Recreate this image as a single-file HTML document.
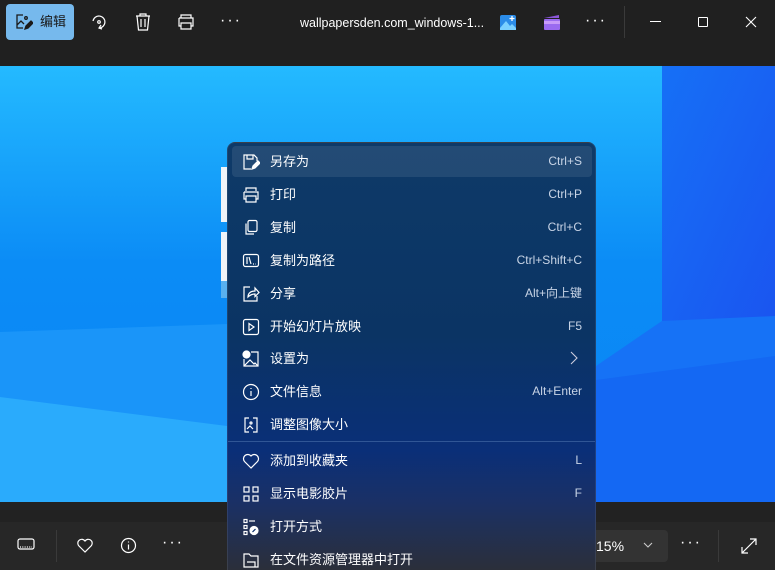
<!DOCTYPE html>
<html><head><meta charset="utf-8"><style>
*{margin:0;padding:0;box-sizing:border-box}
html,body{width:775px;height:570px;overflow:hidden}
body{background:#202020;font-family:"Liberation Sans","Noto Sans CJK SC",sans-serif;color:#fff;position:relative}
.abs{position:absolute}
.top{left:0;top:0;width:775px;height:66px;background:#202020}
.edit{left:6px;top:4px;width:68px;height:36px;background:#76b9ed;border-radius:4px;color:#1a1a1a;font-size:13px}
.botgap{left:0;top:502px;width:775px;height:20px;background:#222}
.menu{left:227px;top:142px;width:369px;height:428px;border-radius:8px 8px 0 0;border:1px solid rgba(255,255,255,0.08);border-bottom:none;
background:linear-gradient(180deg,#0e3a68 0%,#0b3464 45%,#0a2f78 72%,#1a3066 84%,#2b2f3a 100%);overflow:hidden}
.row{position:absolute;left:4px;width:360px;height:31px;font-size:13px}
.row .t{position:absolute;left:38px;top:7px;line-height:17px}
.row .k{position:absolute;right:10px;top:8px;font-size:12px;color:#c8d4e6;line-height:15px}
.row svg{position:absolute;left:10px;top:7px}
.sel{background:rgba(255,255,255,0.09);border-radius:4px}
</style></head><body>
<svg class="abs" style="left:0;top:66px" width="775" height="436">
<defs>
<linearGradient id="g1" x1="0" y1="0" x2="0" y2="1"><stop offset="0" stop-color="#24baff"/><stop offset="0.45" stop-color="#0b8cf6"/><stop offset="1" stop-color="#0a84f4"/></linearGradient>
<linearGradient id="g2" x1="0" y1="0" x2="1" y2="1"><stop offset="0" stop-color="#1670f6"/><stop offset="1" stop-color="#1a55f0"/></linearGradient>
</defs>
<rect width="775" height="436" fill="url(#g1)"/>
<rect x="662" y="0" width="113" height="255" fill="url(#g2)"/>
<polygon points="596,300 662,255 775,250 775,300 596,315" fill="#1672f6"/>
<polygon points="0,266 227,258 227,436 0,436" fill="#1a95f9"/>
<polygon points="0,331 227,360 227,436 0,436" fill="#2aabfc"/>
<polygon points="596,314 775,290 775,436 596,436" fill="#1468f3"/>
<rect x="221" y="101" width="7" height="55" fill="#f0f4f8"/>
<rect x="221" y="166" width="7" height="49" fill="#f0f4f8"/>
<rect x="221" y="215" width="7" height="17" fill="#58b0f0"/>
</svg>
<div class="abs top"></div>
<div class="abs edit">
<svg class="abs" style="left:9px;top:9px" width="18" height="18" viewBox="0 0 18 18" fill="none" stroke="#1a1a1a" stroke-width="1.3"><path d="M8 2H2v13h6M2 12l4-4 3 3"/><circle cx="11" cy="5" r="1.3"/><path d="M10 16l1-3 5-5 2 2-5 5z" fill="#1a1a1a"/></svg>
<span class="abs" style="left:34px;top:10px;line-height:16px">编辑</span></div>
<svg class="abs" style="left:89px;top:12px" width="20" height="20" viewBox="0 0 20 20" fill="none" stroke="#fff" stroke-width="1.2"><path d="M4 9a6 6 0 1 1 6 7"/><path d="M12 13l-2 3 3 1"/><circle cx="10" cy="10" r="1.3"/></svg>
<svg class="abs" style="left:134px;top:12px" width="18" height="20" viewBox="0 0 18 20" fill="none" stroke="#fff" stroke-width="1.2"><path d="M2 4h14M6 4V2h6v2M3 4l1.5 14h9L15 4M7 7v8M11 7v8"/></svg>
<svg class="abs" style="left:176px;top:13px" width="20" height="18" viewBox="0 0 20 18" fill="none" stroke="#fff" stroke-width="1.2"><path d="M5 5V2h10v3M3 5h14v8h-2M5 13H3V5M5 10h10v6H5z"/></svg>
<div class="abs" style="left:220px;top:12px;font-size:16px;letter-spacing:2px">···</div>
<div class="abs" style="left:300px;top:15px;font-size:12.5px;line-height:16px;color:#fff">wallpapersden.com_windows-1...</div>
<svg class="abs" style="left:500px;top:15px" width="16" height="15" viewBox="0 0 16 15"><rect width="16" height="15" rx="2" fill="#2b8ce8"/><path d="M0 13l6-7 4 5 2-2 4 4v2H0z" fill="#7ad0ff"/><path d="M12 1v5M9.5 3.5h5" stroke="#fff" stroke-width="1.3"/></svg>
<svg class="abs" style="left:543px;top:14px" width="17" height="16" viewBox="0 0 17 16"><path d="M1 4l15-3v3z" fill="#8a55d8"/><rect x="1" y="5" width="16" height="11" rx="1" fill="#9a6af0"/><rect x="1" y="7" width="16" height="3" fill="#c79af8"/></svg>
<div class="abs" style="left:585px;top:12px;font-size:16px;letter-spacing:2px">···</div>
<div class="abs" style="left:624px;top:6px;width:1px;height:32px;background:#3a3a3a"></div>
<div class="abs" style="left:650px;top:21px;width:11px;height:1px;background:#fff"></div>
<div class="abs" style="left:698px;top:17px;width:10px;height:10px;border:1px solid #fff;border-radius:1px"></div>
<svg class="abs" style="left:745px;top:16px" width="12" height="12" viewBox="0 0 12 12" stroke="#fff" stroke-width="1.1"><path d="M1 1l10 10M11 1L1 11"/></svg>

<div class="abs botgap"></div>
<div class="abs" style="left:0;top:522px;width:775px;height:48px;background:#272727"></div>
<svg class="abs" style="left:17px;top:537px" width="18" height="14" viewBox="0 0 18 14" fill="none" stroke="#fff" stroke-width="1.2"><rect x="1" y="2" width="16" height="10" rx="2"/><path d="M3 10h12" stroke-dasharray="1 1.3"/></svg>
<div class="abs" style="left:56px;top:530px;width:1px;height:32px;background:#3a3a3a"></div>
<svg class="abs" style="left:76px;top:538px" width="18" height="16" viewBox="0 0 18 16" fill="none" stroke="#fff" stroke-width="1.2"><path d="M9 14L2.5 7.5A3.6 3.6 0 0 1 9 3a3.6 3.6 0 0 1 6.5 4.5z"/></svg>
<svg class="abs" style="left:120px;top:537px" width="17" height="17" viewBox="0 0 17 17" fill="none" stroke="#fff" stroke-width="1.2"><circle cx="8.5" cy="8.5" r="7"/><path d="M8.5 7.5v5M8.5 4.5v1"/></svg>
<div class="abs" style="left:162px;top:534px;font-size:16px;letter-spacing:2px">···</div>
<div class="abs" style="left:560px;top:530px;width:108px;height:32px;background:#333;border-radius:4px"></div>
<div class="abs" style="left:596px;top:538px;font-size:14px;line-height:17px">15%</div>
<svg class="abs" style="left:643px;top:542px" width="10" height="6" viewBox="0 0 10 6" fill="none" stroke="#ccc" stroke-width="1.1"><path d="M1 1l4 4 4-4"/></svg>
<div class="abs" style="left:680px;top:534px;font-size:16px;letter-spacing:2px">···</div>
<div class="abs" style="left:718px;top:530px;width:1px;height:32px;background:#3a3a3a"></div>
<svg class="abs" style="left:741px;top:538px" width="16" height="16" viewBox="0 0 16 16" fill="none" stroke="#fff" stroke-width="1.2"><path d="M1 15L15 1M9 1h6v6M1 9v6h6"/></svg>

<div class="abs menu">
<div class="row sel" style="top:3px"><svg width="18" height="18" viewBox="0 0 18 18" fill="none" stroke="#fff" stroke-width="1.2"><path d="M9 16H2V2h10l3 3v3M5 2v4h6V2"/><path d="M10 16l1-3 5-5 2 2-5 5z" fill="#fff"/></svg><span class="t">另存为</span><span class="k">Ctrl+S</span></div>
<div class="row" style="top:36px"><svg width="18" height="18" viewBox="0 0 18 18" fill="none" stroke="#fff" stroke-width="1.2"><path d="M4 5V2h10v3M2 6h14v7h-2M4 13H2V6M4 10h10v6H4z"/></svg><span class="t">打印</span><span class="k">Ctrl+P</span></div>
<div class="row" style="top:69px"><svg width="18" height="18" viewBox="0 0 18 18" fill="none" stroke="#fff" stroke-width="1.2"><rect x="6" y="1.5" width="9" height="11" rx="1.5"/><path d="M4 4.5v10.5h8"/></svg><span class="t">复制</span><span class="k">Ctrl+C</span></div>
<div class="row" style="top:102px"><svg width="18" height="18" viewBox="0 0 18 18" fill="none" stroke="#fff" stroke-width="1.2"><rect x="1.5" y="2.5" width="15" height="12" rx="2"/><path d="M5 5v7M7 5l2 7M11 12h1M13.5 12h.5"/></svg><span class="t">复制为路径</span><span class="k">Ctrl+Shift+C</span></div>
<div class="row" style="top:135px"><svg width="18" height="18" viewBox="0 0 18 18" fill="none" stroke="#fff" stroke-width="1.2"><path d="M8 2H2v14h13v-5"/><path d="M6 12c0-4 3-6 7-6V3l4 4.5-4 4V9c-3 0-5 1-7 3z"/></svg><span class="t">分享</span><span class="k">Alt+向上键</span></div>
<div class="row" style="top:168px"><svg width="18" height="18" viewBox="0 0 18 18" fill="none" stroke="#fff" stroke-width="1.2"><rect x="1.5" y="1.5" width="15" height="15" rx="2"/><path d="M7 5.5v7l5-3.5z"/></svg><span class="t">开始幻灯片放映</span><span class="k">F5</span></div>
<div class="row" style="top:200px"><svg width="18" height="18" viewBox="0 0 18 18" fill="none" stroke="#fff" stroke-width="1.2"><path d="M9 2h7v14H2V9"/><path d="M2 16l6-6 4 4 1-1 3 3"/><circle cx="4.5" cy="4.5" r="3.5" fill="#fff"/></svg><span class="t">设置为</span><svg style="left:338px;top:8px" width="8" height="14" viewBox="0 0 8 14" fill="none" stroke="#ccd" stroke-width="1.1"><path d="M1 1l6 6-6 6"/></svg></div>
<div class="row" style="top:233px"><svg width="18" height="18" viewBox="0 0 18 18" fill="none" stroke="#fff" stroke-width="1.2"><circle cx="9" cy="9" r="7.5"/><path d="M9 8v5M9 5v1"/></svg><span class="t">文件信息</span><span class="k">Alt+Enter</span></div>
<div class="row" style="top:266px"><svg width="18" height="18" viewBox="0 0 18 18" fill="none" stroke="#fff" stroke-width="1.2"><path d="M7 2H3v14h4M11 2h4v14h-4"/><path d="M5 13l3-3 3 3"/><circle cx="9" cy="7" r="1"/></svg><span class="t">调整图像大小</span></div>
<div class="abs" style="left:0;top:298px;width:369px;height:1px;background:rgba(120,160,210,0.35)"></div>
<div class="row" style="top:302px"><svg width="18" height="18" viewBox="0 0 18 18" fill="none" stroke="#fff" stroke-width="1.2"><path d="M9 16L2.5 9.5A3.8 3.8 0 0 1 9 4a3.8 3.8 0 0 1 6.5 5.5z"/></svg><span class="t">添加到收藏夹</span><span class="k">L</span></div>
<div class="row" style="top:335px"><svg width="18" height="18" viewBox="0 0 18 18" fill="none" stroke="#fff" stroke-width="1.2"><rect x="2" y="2" width="5" height="5"/><rect x="11" y="2" width="5" height="5"/><rect x="2" y="11" width="5" height="5"/><rect x="11" y="11" width="5" height="5"/></svg><span class="t">显示电影胶片</span><span class="k">F</span></div>
<div class="row" style="top:368px"><svg width="18" height="18" viewBox="0 0 18 18" fill="none" stroke="#fff" stroke-width="1.2"><rect x="2" y="1.5" width="3" height="3"/><path d="M7 3h6"/><rect x="2" y="7.5" width="3" height="3"/><rect x="2" y="13.5" width="3" height="3"/><circle cx="12" cy="12.5" r="4" fill="#fff"/><path d="M10.5 14l3-3" stroke="#0b2f6a"/></svg><span class="t">打开方式</span></div>
<div class="row" style="top:401px"><svg width="18" height="18" viewBox="0 0 18 18" fill="none" stroke="#fff" stroke-width="1.2"><path d="M2 3h5l2 2h7v11H2z"/><path d="M5 11h8v5"/></svg><span class="t">在文件资源管理器中打开</span></div>
</div>
</body></html>
